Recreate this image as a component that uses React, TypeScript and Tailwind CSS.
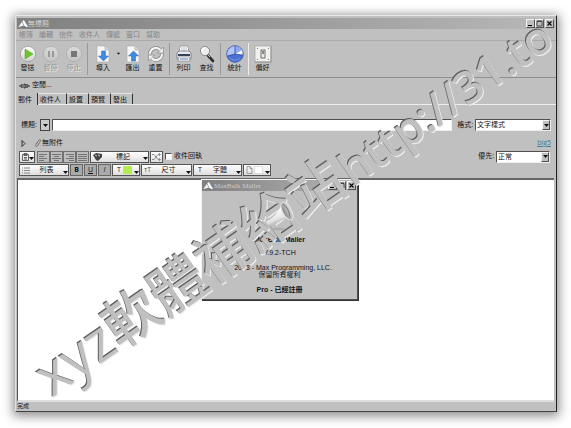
import React from "react";

const raised =
  "border border-t-[#f4f4f4] border-l-[#f4f4f4] border-b-[#505050] border-r-[#505050] bg-[#c0c0c0]";
const sunken =
  "border border-t-[#505050] border-l-[#505050] border-b-[#eeeeee] border-r-[#eeeeee] bg-white";
const field =
  "flex items-center border border-[#555555] bg-gradient-to-b from-white to-[#dedede]";

const menus = ["帳簿", "編輯", "信件", "收件人", "傳遞", "窗口", "幫助"];
const tabs = ["郵件", "收件人", "設置", "預覽", "發出"];

const Horn = ({ className }: { className: string }) => (
  <svg viewBox="0 0 12 10" className={className} aria-hidden="true">
    <path d="M0 9 L5 2 L7 7 Z" fill="#f5f5f5" />
    <path d="M5 2 L7 0 L12 8 L11 9 L7 7 Z" fill="#fff" />
    <path d="M5 2 L7 7 M3 9 L9 9" stroke="#777" strokeWidth=".7" />
  </svg>
);

const RoundIcon = ({ kind }: { kind: "play" | "pause" | "stop" }) => (
  <svg viewBox="0 0 18 18" className="size-[18px]">
    <defs>
      <linearGradient id={`round-${kind}`} x1="0" y1="0" x2="0" y2="1">
        <stop offset="0" stopColor={kind === "play" ? "#ffffff" : "#dadada"} />
        <stop offset="1" stopColor={kind === "play" ? "#d2d2d2" : "#c4c4c4"} />
      </linearGradient>
    </defs>
    <circle
      cx="9"
      cy="9"
      r="7.700"
      fill={`url(#round-${kind})`}
      stroke={kind === "play" ? "#989898" : "#acacac"}
      strokeWidth=".8"
    />
    {kind === "play" && <path d="M6 4 L14 9 L6 14 Z" fill="#6cc62b" stroke="#4f9d22" strokeWidth=".5" />}
    {kind === "pause" && <path d="M6 6h2v6H6zM10 6h2v6h-2z" fill="#999" />}
    {kind === "stop" && <path d="M6 6h6v6H6z" fill="#777" />}
  </svg>
);

const PageIcon = ({ up }: { up?: boolean }) => (
  <svg viewBox="0 0 18 18" className="size-[18px]">
    <path d="M3 1h8l4 4v12H3z" fill="#f7f7f7" stroke="#aaa" strokeWidth=".6" />
    <path d="M11 1v4h4" fill="#d5d5d5" stroke="#aaa" strokeWidth=".6" />
    {up ? (
      <path d="M9.500 6 L14.500 11 H11.500 V16 H7.500 V11 H4.500 Z" fill="#3f8be0" stroke="#2465b4" strokeWidth=".5" />
    ) : (
      <path d="M7.500 6 H11.500 V11 H14.500 L9.500 16 L4.500 11 H7.500 Z" fill="#3f8be0" stroke="#2465b4" strokeWidth=".5" />
    )}
  </svg>
);

const ResetIcon = () => (
  <svg viewBox="0 0 18 18" className="size-[18px]">
    <g fill="none" stroke="#828282" strokeWidth="3.600">
      <path d="M3 9 A6 6 0 0 1 13 4.500" />
      <path d="M15 9 A6 6 0 0 1 5 13.500" />
    </g>
    <path d="M16.500 2v6h-6z M1.500 16v-6h6z" fill="#f2f2f2" stroke="#828282" strokeWidth=".7" />
    <g fill="none" stroke="#f2f2f2" strokeWidth="2.200">
      <path d="M3 9 A6 6 0 0 1 13.500 5" />
      <path d="M15 9 A6 6 0 0 1 4.500 13" />
    </g>
  </svg>
);

const PrintIcon = () => (
  <svg viewBox="0 0 18 18" className="size-[18px]">
    <path d="M5 1h8l1 7H4z" fill="#fdfdfd" stroke="#777" strokeWidth=".6" />
    <path d="M6 3h6M6 5h6" stroke="#a5b2c5" strokeWidth=".8" />
    <path d="M2 8l2-2h10l2 2v6H2z" fill="#e5e7ec" stroke="#62666f" strokeWidth=".7" />
    <path d="M3 9h12v2H3z" fill="#34425c" />
    <path d="M4 12h10l1 4H3z" fill="#fff" stroke="#777" strokeWidth=".6" />
    <path d="M5 14h8" stroke="#4c79c0" />
  </svg>
);

const FindIcon = () => (
  <svg viewBox="0 0 18 18" className="size-[18px]">
    <path d="M9.500 10 L15 16" stroke="#303030" strokeWidth="2.600" strokeLinecap="round" />
    <path d="M10 10 L12 12" stroke="#eee" strokeWidth=".8" />
    <circle cx="7" cy="6" r="4.600" fill="#ededed" stroke="#8b8b8b" strokeWidth="1" />
    <path d="M4 6a3 3 0 0 1 3-3" stroke="#fff" strokeWidth="1.400" fill="none" />
  </svg>
);

const PieIcon = () => (
  <svg viewBox="0 0 18 18" className="size-[18px]">
    <circle cx="9" cy="9" r="8.300" fill="#4770d2" stroke="#3652a8" strokeWidth=".8" />
    <path d="M9 9 V1 A8 8 0 0 1 16 5 Z" fill="#8faaf0" />
    <path d="M9 9 L1.500 11 A8 8 0 0 1 9 1 Z" fill="#b3c5f5" />
    <path d="M9 9 L16 5 A8 8 0 0 1 16.500 10 Z" fill="#fff" />
    <path d="M9 9 L16.500 10 M9 9 L1.500 11 M9 1v8" stroke="#30489a" strokeWidth=".8" />
    <path d="M3 12a7 7 0 0 0 11 1" stroke="#7598ee" fill="none" />
  </svg>
);

const SwitchIcon = () => (
  <svg viewBox="0 0 18 18" className="size-[18px]">
    <rect x="1" y="1" width="16" height="16" fill="#f0f1ed" stroke="#aaa" strokeWidth=".8" />
    <path d="M1 17h16V1" fill="none" stroke="#888" strokeWidth=".8" />
    <rect x="7" y="5" width="4" height="8" fill="#e6e6e6" stroke="#555" strokeWidth=".8" />
    <rect x="8" y="6" width="2" height="3" fill="#888" />
    <path d="M3 3h1v1H3zM14 3h1v1h-1zM3 14h1v1H3zM14 14h1v1h-1z" fill="#888" />
  </svg>
);

const Tool = ({
  label,
  disabled,
  wide,
  children,
}: {
  label: string;
  disabled?: boolean;
  wide?: boolean;
  children: React.ReactNode;
}) => (
  <button
    disabled={disabled}
    className={`flex flex-col items-center shrink-0 ${wide ? "w-[26px]" : "w-[23px]"} ${
      disabled ? "text-[#949494] [text-shadow:1px_1px_0_#eee]" : ""
    }`}
  >
    {children}
    <span className="leading-[10px]">{label}</span>
  </button>
);

const Separator = ({ light }: { light?: boolean }) => (
  <span className={`mx-[2px] h-8 w-px shrink-0 ${light ? "bg-[#eeeeee]" : "bg-[#999999]"}`} />
);

const Arrow = ({ className = "" }: { className?: string }) => (
  <svg viewBox="0 0 5 3" className={`h-[3px] w-[5px] shrink-0 ${className}`} aria-hidden="true">
    <path d="M0 0h5L2.500 3z" fill="#111" />
  </svg>
);

const WindowButtons = () => (
  <div className="flex">
    <button aria-label="Minimize" className={`flex h-[9px] w-[9px] items-center justify-center ${raised}`}>
      <svg viewBox="0 0 7 7" className="size-[7px]"><path d="M1 5h4v1H1z" /></svg>
    </button>
    <button aria-label="Maximize" className={`flex h-[9px] w-[9px] items-center justify-center ${raised}`}>
      <svg viewBox="0 0 7 7" className="size-[7px]">
        <path d="M1 1.500h5v4.500H1z M1 1h5" fill="none" stroke="#333" strokeWidth=".8" />
      </svg>
    </button>
    <button aria-label="Close" className={`ml-px flex h-[9px] w-[9px] items-center justify-center ${raised}`}>
      <svg viewBox="0 0 7 7" className="size-[7px]">
        <path d="M1.500 1.500l4 4M5.500 1.500l-4 4" stroke="#000" strokeWidth="1.100" />
      </svg>
    </button>
  </div>
);

const Select = ({ id, value, className }: { id: string; value: string; className: string }) => (
  <div className={`relative h-3 ${sunken} ${className}`}>
    <select id={id} className="block h-full w-full appearance-none bg-transparent pl-px leading-[10px] outline-none">
      <option>{value}</option>
    </select>
    <span className={`pointer-events-none absolute inset-y-0 right-0 flex w-2 items-center justify-center ${raised}`}>
      <Arrow />
    </span>
  </div>
);

const Dropdown = ({
  label,
  className,
  children,
}: {
  label?: string;
  className: string;
  children: React.ReactNode;
}) => (
  <button className={`h-3 pl-[2px] ${field} ${className}`}>
    {children}
    <span className="flex-1 text-center leading-[10px]">{label}</span>
    <Arrow className="mt-1" />
  </button>
);

const Lines = ({ d, label }: { d: string; label: string }) => (
  <button
    aria-label={label}
    className="flex h-3 w-[13px] items-center justify-center border border-[#707070] bg-[#bdbdbd]"
  >
    <svg viewBox="0 0 9 8" className="h-2 w-[9px]">
      <path d={d} stroke="#737373" />
    </svg>
  </button>
);

const AboutDialog = () => (
  <div
    role="dialog"
    aria-label="MaxBulk Mailer"
    className={`absolute top-px left-[185px] h-[121px] w-[157px] text-center font-['Liberation_Sans','Noto_Sans_CJK_TC',sans-serif] shadow-[1px_1px_0_#333] ${raised}`}
  >
    <div className="flex h-[11px] items-center bg-gradient-to-r from-[#808080] to-[#b8b8b8] px-px text-[#cccccc]">
      <Horn className="h-2 w-[10px]" />
      <span className="flex-1 pl-px text-left font-['Liberation_Serif',serif] text-[7px] leading-[10px]">
        MaxBulk Mailer
      </span>
      <WindowButtons />
    </div>
    <svg viewBox="0 0 34 34" className="relative z-10 mx-auto mt-2 h-[34px] w-[34px]" aria-hidden="true">
      <defs>
        <linearGradient id="cone" x1="0.3" y1="0.2" x2="0.7" y2="1">
          <stop offset="0" stopColor="#fff" />
          <stop offset="0.5" stopColor="#e6e6e6" />
          <stop offset="1" stopColor="#8f8f8f" />
        </linearGradient>
        <linearGradient id="bell" x1="0" y1="0" x2="1" y2="0">
          <stop offset="0" stopColor="#888" />
          <stop offset="1" stopColor="#dcdcdc" />
        </linearGradient>
      </defs>
      <ellipse cx="15" cy="30" rx="7" ry="1.500" fill="#adadad" />
      <path d="M3 23 Q14 17 18 7 L28 20 Q17 20 6 27 Z" fill="url(#cone)" />
      <ellipse cx="24" cy="12" rx="4.500" ry="10" transform="rotate(-28 24 12)" fill="url(#bell)" stroke="#e4e4e4" />
      <path d="M20 5 Q26 9 27 18" fill="none" stroke="#777" />
    </svg>
    <p className="mt-[2px] text-[7px] leading-[10px] font-bold">MaxBulk Mailer</p>
    <p className="mt-1 leading-[8px]">V.9.2-TCH</p>
    <p className="mt-[7px] leading-[7px]">© 2008 - Max Programming, LLC.</p>
    <p className="leading-[8px]">保留所有權利</p>
    <p className="mt-[7px] leading-[8px] font-bold">Pro - 已經註冊</p>
  </div>
);

const Watermark = () => (
  <div
    aria-hidden="true"
    className="pointer-events-none absolute inset-0 drop-shadow-[1px_1px_0_#eeeeee]"
  >
    <div className="h-full w-full drop-shadow-[-1px_-1px_0_#5c5c5c]">
      <div className="absolute top-[346px] left-[58px] flex origin-bottom-left -rotate-35 items-baseline gap-1 whitespace-nowrap text-[#c0c0c0]">
        <span className="text-[56px] leading-[56px] font-medium">xyz軟體補給站</span>
        <span className="text-[45px] leading-[56px] font-semibold">http://31.to</span>
      </div>
    </div>
  </div>
);

const App: React.FC = () => {
  return (
    <div className="relative flex min-h-screen overflow-hidden bg-white pt-[15px] pr-[14px] pb-[16px] pl-[15px] font-['Open_Sans','Noto_Sans_CJK_TC',sans-serif] text-[7px] text-[#111111]">
      <div className="flex min-w-0 flex-1 flex-col border border-t-[#e8e8e8] border-l-[#e0e0e0] border-r-[#222222] border-b-[#444444] bg-[#c0c0c0] shadow-[0_2px_10px_2px_rgba(0,0,0,0.45)]">
        <header className="mx-px mt-[2px] flex h-[11px] items-center bg-gradient-to-r from-[#808080] to-[#b8b8b8] px-px text-[#d2d2d2]">
          <Horn className="h-2 w-[10px]" />
          <h1 className="flex-1 text-[7px] leading-[10px]">無標題</h1>
          <WindowButtons />
        </header>

        <nav className="flex h-3 items-center gap-[6px] border-b border-[#aaaaaa] pl-[3px] text-[#858585]">
          {menus.map((m) => (
            <button key={m} className="leading-[10px]">
              {m}
            </button>
          ))}
        </nav>

        <div className="flex h-[37px] items-center border-b border-[#909090]">
          <Tool label="發送"><RoundIcon kind="play" /></Tool>
          <Tool label="暫停" disabled><RoundIcon kind="pause" /></Tool>
          <Tool label="停止" disabled><RoundIcon kind="stop" /></Tool>
          <Separator />
          <Tool label="導入" wide><PageIcon /></Tool>
          <Arrow className="mb-3 scale-75" />
          <Tool label="匯出"><PageIcon up /></Tool>
          <Tool label="重置"><ResetIcon /></Tool>
          <Separator />
          <Tool label="列印"><PrintIcon /></Tool>
          <Tool label="查找"><FindIcon /></Tool>
          <Separator />
          <Tool label="統計"><PieIcon /></Tool>
          <Separator light />
          <Tool label="偏好"><SwitchIcon /></Tool>
        </div>

        <p className="flex h-[15px] items-center gap-[2px] pl-[3px]">
          <svg viewBox="0 0 11 6" className="h-[6px] w-[11px]" aria-hidden="true">
            <path d="M0 3h2M9 3h2M3 1L2 3l1 2M8 1l1 2-1 2M4 1v4M7 1v4M5 1h1v4H5" fill="none" stroke="#222" strokeWidth=".9" />
          </svg>
          空閒...
        </p>

        <div role="tablist" className="flex h-3 border-b border-[#eeeeee]">
          {tabs.map((t, i) => (
            <button
              key={t}
              role="tab"
              aria-selected={i === 0}
              className={`border-r border-[#333333] leading-[11px] ${
                i === 0 ? "-mb-px bg-[#c0c0c0] pr-[5px] pl-[2px]" : "border-t border-t-[#e5e5e5] pr-[5px] pl-[2px]"
              }`}
            >
              {t}
            </button>
          ))}
        </div>

        <div className="mt-[14px] flex h-3 items-center px-[5px]">
          <label htmlFor="subject" className="w-[19px]">標題:</label>
          <button aria-label="標題" className="flex h-3 w-[10px] items-center justify-center border border-[#444444] bg-[#cccccc]">
            <Arrow />
          </button>
          <input id="subject" className={`ml-[2px] h-3 min-w-0 flex-1 outline-none ${sunken}`} />
          <label htmlFor="format" className="pr-[2px] pl-[5px]">格式:</label>
          <Select id="format" value="文字樣式" className="w-[76px]" />
        </div>

        <div className="mt-[6px] flex h-3 items-center px-[5px]">
          <svg viewBox="0 0 5 7" className="h-[7px] w-[5px]" aria-hidden="true">
            <path d="M1 .5v6L4 3.500z" fill="none" stroke="#222" strokeWidth=".9" />
          </svg>
          <svg viewBox="0 0 8 8" className="ml-2 size-2" aria-hidden="true">
            <path d="M2 5l3-4c1-1 2 0 1.500 1L3.500 7C2.500 8 1 7 1.500 6L4 3" fill="none" stroke="#777" />
          </svg>
          <span className="flex-1">無附件</span>
          <a href="#big5" className="leading-[8px] text-[#3b7f9b] underline">big5</a>
        </div>

        <div className="mt-px flex h-[13px] items-center pr-[6px] pl-[3px]">
          <button aria-label="貼上" className={`mr-[2px] h-3 w-4 justify-between pl-[2px] ${field}`}>
            <svg viewBox="0 0 7 8" className="h-2 w-[7px]">
              <path d="M.5 1.500h6v6h-6zM2 .5h3v2H2zM2 4.500h3M2 6h3" fill="none" stroke="#444" strokeWidth=".8" />
            </svg>
            <Arrow className="mt-1" />
          </button>
          <Lines label="靠左" d="M0 1.500h8M0 3.500h5M0 5.500h8M0 7.500h5" />
          <Lines label="置中" d="M0 1.500h9M2 3.500h5M0 5.500h9M2 7.500h5" />
          <Lines label="靠右" d="M1 1.500h8M4 3.500h5M1 5.500h8M4 7.500h5" />
          <Lines label="對齊" d="M0 1.500h9M0 3.500h9M0 5.500h9M0 7.500h9" />
          <Dropdown label="標記" className="mx-px w-[59px]">
            <svg viewBox="0 0 10 8" className="h-2 w-[10px]">
              <path d="M0 2l3-2 6 1v3L5 8 3 7z" fill="#444" />
              <path d="M2 2l2 1M5 2l2 1" stroke="#ccc" />
            </svg>
          </Dropdown>
          <button aria-label="隨機" className={`h-3 w-[13px] justify-center ${field}`}>
            <svg viewBox="0 0 9 8" className="h-2 w-[9px]">
              <path d="M0 1.500h2l4 5h2M0 6.500h2l4-5h2M7 0l1.500 1.500L7 3M7 5l1.500 1.500L7 8" fill="none" stroke="#777" strokeWidth=".8" />
            </svg>
          </button>
          <label className="ml-[2px] flex flex-1 items-center gap-[2px]">
            <input type="checkbox" className={`size-[7px] appearance-none ${sunken}`} />
            收件回執
          </label>
          <label htmlFor="priority" className="pr-[2px]">優先:</label>
          <Select id="priority" value="正常" className="w-[54px]" />
        </div>

        <div className="mt-px flex h-[14px] gap-px pl-[3px]">
          <Dropdown label="列表" className="w-[50px]">
            <svg viewBox="0 0 8 7" className="h-[7px] w-2">
              <path d="M0 1h1M0 3.500h1M0 6h1M2 1h6M2 3.500h6M2 6h6" stroke="#888" />
            </svg>
          </Dropdown>
          <button className="h-3 w-[13px] border border-[#666666] bg-[#aaaaaa] leading-[10px] font-bold">B</button>
          <button className="h-3 w-[13px] border border-[#666666] bg-[#aaaaaa] leading-[10px] underline">U</button>
          <button className="h-3 w-[13px] border border-[#666666] bg-[#aaaaaa] leading-[10px] italic">I</button>
          <Dropdown className="w-7">
            <span className="w-2 text-center leading-[10px]">T</span>
            <span className="h-2 w-[9px] shrink-0 bg-[#b4ec51]" />
          </Dropdown>
          <Dropdown label="尺寸" className="w-[51px]">
            <span className="leading-[10px] text-[#555555]">тT</span>
          </Dropdown>
          <Dropdown label="字體" className="w-[49px]">
            <span className="w-2 text-center leading-[10px]">T</span>
          </Dropdown>
          <Dropdown className="w-7">
            <svg viewBox="0 0 7 8" className="mr-px h-2 w-[7px]">
              <path d="M1 .5h3l2 2v5H1zM4 .5v2h2" fill="none" stroke="#888" strokeWidth=".8" />
            </svg>
            <span className="h-2 w-[9px] shrink-0 border border-[#dddddd] bg-white" />
          </Dropdown>
        </div>

        <main className="relative flex flex-1 flex-col pr-[2px] pl-px">
          <textarea
            aria-label="郵件"
            className="w-full flex-1 resize-none border-t-2 border-b-2 border-l border-t-[#666666] border-b-[#dedede] border-l-[#555555] bg-white outline-none"
          />
          <AboutDialog />
        </main>

        <footer className="h-[9px] pl-px text-[6px] leading-[8px]">完成</footer>
      </div>
      <Watermark />
    </div>
  );
};

export default App;
